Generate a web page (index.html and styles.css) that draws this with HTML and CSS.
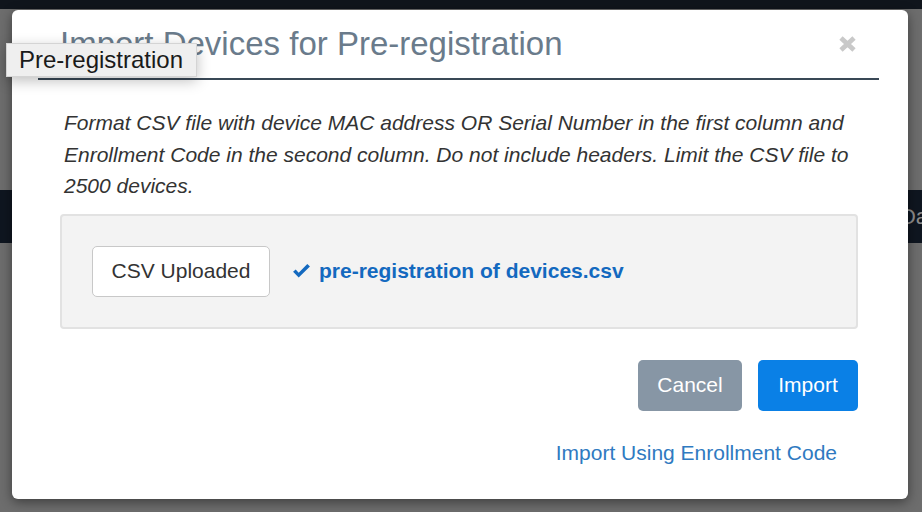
FILE: index.html
```html
<!DOCTYPE html>
<html>
<head>
<meta charset="utf-8">
<link rel="stylesheet" href="styles.css">
</head>
<body>
<div class="page">
  <div class="topbar"></div>
  <div class="spacer1"></div>
  <div class="navband"><span class="navtext">Da</span></div>
</div>
<div class="modal">
  <div class="modal-header">
    <h1 class="title">Import Devices for Pre-registration</h1>
    <span class="close"><svg viewBox="0 0 19 18" width="19" height="18"><path d="M3 3 L16 15 M16 3 L3 15" stroke="#c9c9c9" stroke-width="4.8" stroke-linecap="butt"/></svg></span>
  </div>
  <p class="desc">Format CSV file with device MAC address OR Serial Number in the first column and Enrollment Code in the second column. Do not include headers. Limit the CSV file to 2500 devices.</p>
  <div class="upload-box">
    <button class="btn-upload">CSV Uploaded</button>
    <span class="file">
      <svg class="check" viewBox="0 0 20 16" width="19" height="15"><path d="M1 8.2 L7 14.5 L19 2.6 L16.2 0 L7 9.2 L3.8 5.8 Z" fill="#1369bf"/></svg>
      pre-registration of devices.csv
    </span>
  </div>
  <div class="actions">
    <button class="btn btn-cancel">Cancel</button>
    <button class="btn btn-import">Import</button>
  </div>
  <div class="alt-link"><a href="#">Import Using Enrollment Code</a></div>
</div>
<div class="tooltip">Pre-registration</div>
</body>
</html>
```
FILE: styles.css
```css
html, body {
  margin: 0;
  padding: 0;
}
body {
  width: 922px;
  height: 512px;
  overflow: hidden;
  background: #6d6d6d;
  font-family: "Liberation Sans", Arial, sans-serif;
  position: relative;
}
.page {
  display: flex;
  flex-direction: column;
}
.topbar {
  height: 9px;
  background: #10151c;
}
.spacer1 {
  height: 181px;
}
.navband {
  height: 53px;
  background: #0f1620;
  display: flex;
  align-items: center;
  justify-content: flex-end;
  overflow: hidden;
}
.navtext {
  color: #8c8c8c;
  font-size: 22px;
  margin-right: -6px;
}
.modal {
  position: absolute;
  top: 10px;
  left: 12px;
  width: 896px;
  height: 489px;
  background: #fff;
  border-radius: 6px;
  box-shadow: 0 3px 12px rgba(0, 0, 0, 0.45);
  display: flex;
  flex-direction: column;
}
.modal-header {
  margin: 0 29px 0 26px;
  height: 70px;
  box-sizing: border-box;
  border-bottom: 2px solid #394856;
  display: flex;
  align-items: flex-start;
  justify-content: space-between;
}
.title {
  margin: 15px 0 0 22px;
  font-size: 33px;
  font-weight: normal;
  line-height: 38px;
  color: #6a7b8b;
}
.close {
  margin: 25px 22px 0 0;
  display: flex;
}
.desc {
  margin: 27px 40px 0 52px;
  font-size: 21px;
  line-height: 31.5px;
  font-style: italic;
  color: #333;
}
.upload-box {
  margin: 12px 50px 0 48px;
  height: 115px;
  box-sizing: border-box;
  background: #f3f3f3;
  border: 2px solid #e2e2e2;
  border-radius: 4px;
  display: flex;
  align-items: center;
  padding-left: 30px;
  gap: 22px;
}
.btn-upload {
  width: 178px;
  height: 51px;
  background: #fff;
  border: 1.5px solid #c8c8c8;
  border-radius: 5px;
  font-family: inherit;
  font-size: 21px;
  color: #333;
}
.file {
  display: flex;
  align-items: center;
  gap: 8px;
  color: #1369bf;
  font-size: 21px;
  font-weight: bold;
}
.actions {
  margin: 31px 50px 0 0;
  display: flex;
  justify-content: flex-end;
  gap: 16px;
}
.btn {
  height: 51px;
  border: none;
  border-radius: 5px;
  color: #fff;
  font-family: inherit;
  font-size: 21px;
}
.btn-cancel {
  width: 104px;
  background: #8796a5;
}
.btn-import {
  width: 100px;
  background: #0a80e6;
}
.alt-link {
  margin: 30px 71px 0 0;
  display: flex;
  justify-content: flex-end;
  line-height: 24px;
}
.alt-link a {
  color: #2f7ac1;
  text-decoration: none;
  font-size: 21px;
}
.tooltip {
  position: absolute;
  top: 43px;
  left: 6px;
  width: 191px;
  height: 34px;
  box-sizing: border-box;
  background: #efefef;
  border: 1px solid #d4d4d4;
  box-shadow: 0 4px 14px rgba(0, 0, 0, 0.25);
  font-size: 24px;
  line-height: 32px;
  padding-left: 12px;
  color: #1a1a1a;
  white-space: nowrap;
}
```
